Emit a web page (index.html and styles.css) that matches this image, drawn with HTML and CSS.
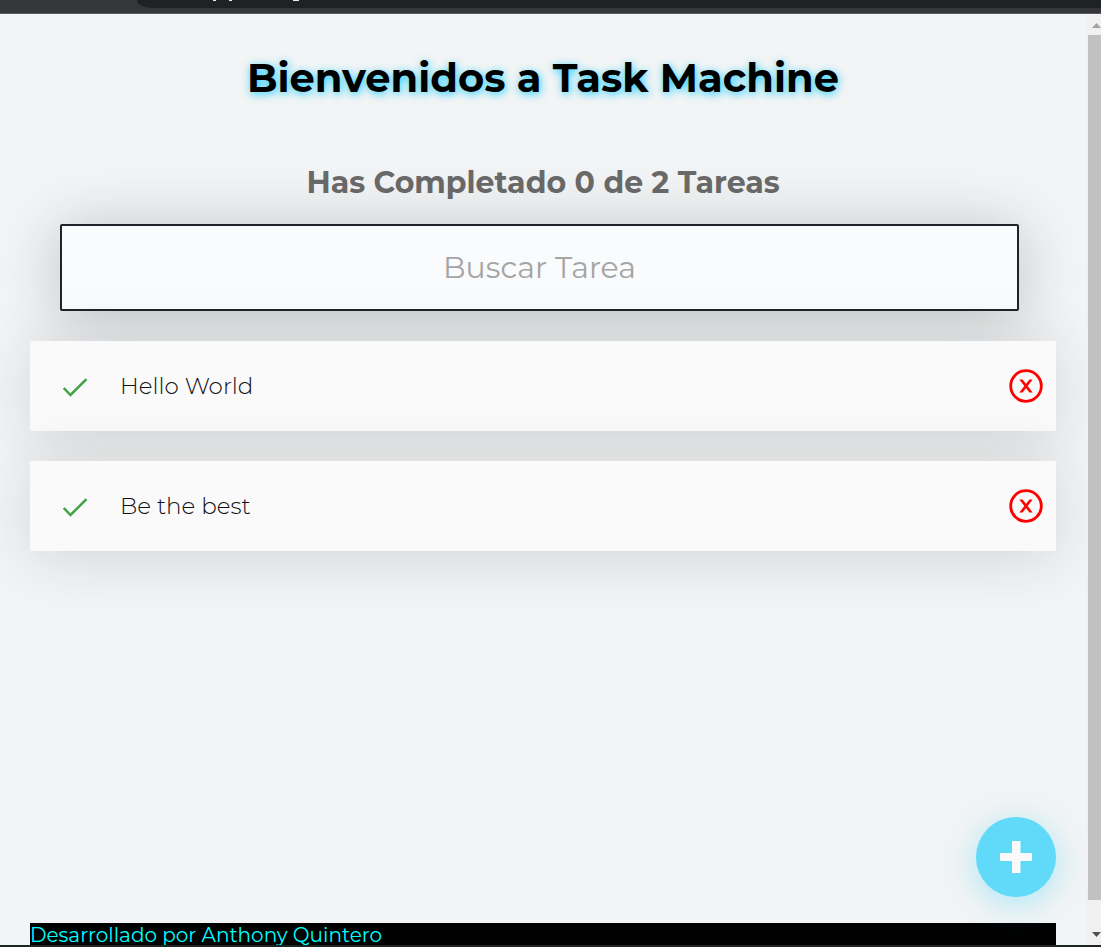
FILE: index.html
```html
<!DOCTYPE html>
<html lang="es">
<head>
  <meta charset="utf-8">
  <meta name="viewport" content="width=device-width, initial-scale=1">
  <title>Task Machine</title>
  <link rel="stylesheet" href="styles.css">
</head>
<body>
  <div class="window">
    <div class="toolbar">
      <div class="address">
        <svg class="address-marks" width="180" height="1" viewBox="0 0 180 1" aria-hidden="true">
          <path d="M76 0h3v1h-3zM92 0h3v1h-3zM156 0h6v1h-6z" fill="#e8eaed"/>
        </svg>
      </div>
    </div>
    <div class="viewport">
      <main class="page">
        <h1 class="title">Bienvenidos a Task Machine</h1>
        <h2 class="counter">Has Completado 0 de 2 Tareas</h2>
        <input class="search" type="text" placeholder="Buscar Tarea" aria-label="Buscar Tarea">
        <ul class="tasks">
          <li class="task">
            <button class="icon-button check" type="button" aria-label="Completar Hello World">
              <svg width="30" height="30" viewBox="0 0 30 30"><path d="M3.700 17l6.800 7L26.500 8.200" fill="none" stroke="#43a047" stroke-width="2.500"/></svg>
            </button>
            <p class="task-text">Hello World</p>
            <button class="icon-button delete" type="button" aria-label="Eliminar Hello World">
              <svg width="34" height="34" viewBox="0 0 34 34"><circle cx="17" cy="17" r="15.300" fill="none" stroke="red" stroke-width="2.800"/><path d="M10.300 10.500h3.300L23.700 23.500h-3.300zM20.400 10.500h3.300L13.600 23.500h-3.300z" fill="red"/></svg>
            </button>
          </li>
          <li class="task">
            <button class="icon-button check" type="button" aria-label="Completar Be the best">
              <svg width="30" height="30" viewBox="0 0 30 30"><path d="M3.700 17l6.800 7L26.500 8.200" fill="none" stroke="#43a047" stroke-width="2.500"/></svg>
            </button>
            <p class="task-text">Be the best</p>
            <button class="icon-button delete" type="button" aria-label="Eliminar Be the best">
              <svg width="34" height="34" viewBox="0 0 34 34"><circle cx="17" cy="17" r="15.300" fill="none" stroke="red" stroke-width="2.800"/><path d="M10.300 10.500h3.300L23.700 23.500h-3.300zM20.400 10.500h3.300L13.600 23.500h-3.300z" fill="red"/></svg>
            </button>
          </li>
        </ul>
        <footer class="credit">Desarrollado por Anthony Quintero</footer>
        <button class="add" type="button" aria-label="Crear tarea">
          <svg width="32" height="32" viewBox="0 0 32 32"><path d="M12 0h8.500v12H32v8H20.500v12H12V20H0v-8h12z" fill="#fafafa"/></svg>
        </button>
      </main>
      <div class="scrollbar" aria-hidden="true">
        <svg class="arrow" width="9" height="5" viewBox="0 0 9 5"><path d="M0 5L4.500 0 9 5z" fill="#a3a3a3"/></svg>
        <div class="thumb"></div>
        <svg class="arrow" width="9" height="5" viewBox="0 0 9 5"><path d="M0 0h9L4.500 5z" fill="#505050"/></svg>
      </div>
    </div>
  </div>
</body>
</html>
```
FILE: styles.css
```css
* {
  box-sizing: border-box;
}

body {
  margin: 0;
  font-family: Montserrat, Inter, sans-serif;
  background: #f2f4f5;
}

.window {
  display: flex;
  flex-direction: column;
  height: 100vh;
  overflow: hidden;
  border-bottom: 2px solid #1e241f;
}

.toolbar {
  flex: none;
  height: 14px;
  padding-left: 137px;
  background: #35363a;
  border-bottom: 1px solid #5b5c5f;
}

.address {
  height: 8px;
  background: #202124;
  border-bottom-left-radius: 16px 8px;
}

.address-marks {
  display: block;
}

.viewport {
  flex: 1;
  display: flex;
  min-height: 0;
}

.page {
  position: relative;
  flex: 1;
  display: flex;
  flex-direction: column;
  min-width: 0;
  padding: 0 30px;
  overflow: hidden;
  background: #f2f4f5;
}

.title {
  margin: 0;
  padding-top: 40px;
  font-size: 40px;
  line-height: 48px;
  text-align: center;
  color: #000;
  text-shadow: 1px 2px 8px #1fceff;
}

.counter {
  margin: 0;
  padding-top: 61px;
  font-size: 30px;
  line-height: 40px;
  text-align: center;
  color: #6a6a6a;
}

.search {
  flex: none;
  width: calc(100% - 67px);
  height: 87px;
  margin: 21px 0 0 30px;
  padding: 0 24px;
  border: 2px solid #202329;
  border-radius: 2px;
  outline: none;
  background: #f9fbfc;
  box-shadow: 0 6px 62px rgba(32, 35, 41, 0.25);
  font: 400 30px/40px Montserrat, Inter, sans-serif;
  text-align: center;
  color: #1e1e1f;
}

.search::placeholder {
  color: #a5a5a5;
}

.tasks {
  display: flex;
  flex-direction: column;
  gap: 30px;
  margin: 30px 0 0;
  padding: 0;
  list-style: none;
}

.task {
  position: relative;
  display: flex;
  align-items: center;
  height: 90px;
  padding: 0 13px 0 30px;
  background: #fafafa;
  box-shadow: 0 6px 62px rgba(32, 35, 41, 0.15);
}

.icon-button {
  flex: none;
  display: flex;
  padding: 0;
  border: 0;
  background: none;
  cursor: pointer;
}

.task-text {
  flex: 1;
  margin: 0 0 0 30px;
  font-size: 23px;
  font-weight: 300;
  line-height: 28px;
  color: #111;
}

.credit {
  flex: none;
  margin-top: auto;
  padding-top: 2px;
  background: #000;
  color: #0ff;
  font-size: 20px;
  line-height: 20px;
}

.add {
  position: absolute;
  right: 30px;
  bottom: 48px;
  display: flex;
  align-items: center;
  justify-content: center;
  width: 80px;
  height: 80px;
  padding: 0;
  border: 0;
  border-radius: 50%;
  background: #61dafa;
  box-shadow: 0 6px 31px rgba(97, 218, 250, 0.5);
  cursor: pointer;
}

.scrollbar {
  flex: none;
  display: flex;
  flex-direction: column;
  align-items: center;
  justify-content: space-between;
  width: 15px;
  padding: 9px 0 8px 2px;
  background: #f1f1f1;
}

.arrow {
  flex: none;
  margin-left: 4px;
}

.thumb {
  flex: 1;
  align-self: stretch;
  margin: 7px 0 32px;
  background: #c1c1c1;
}
```
